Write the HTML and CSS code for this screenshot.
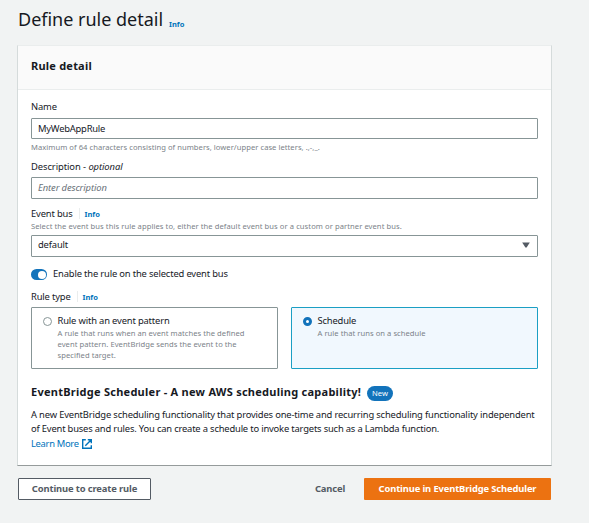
FILE: index.html
```html
<!DOCTYPE html>
<html lang="en">
<head>
<meta charset="utf-8">
<title>Define rule detail</title>
<link rel="stylesheet" href="styles.css">
</head>
<body>
<main class="page">
  <header class="page-head">
    <h1>Define rule detail</h1><a class="info">Info</a>
  </header>
  <section class="card">
    <div class="card-head"><h2>Rule detail</h2></div>
    <div class="card-body">
      <div class="label">Name</div>
      <div class="input input-name">MyWebAppRule</div>
      <div class="hint">Maximum of 64 characters consisting of numbers, lower/upper case letters, .,-,_.</div>

      <div class="label label-desc"><span>Description - <i>optional</i></span></div>
      <div class="input"><span class="placeholder">Enter description</span></div>

      <div class="label label-bus">Event bus<span class="rule"></span><a class="info">Info</a></div>
      <div class="hint hint-bus">Select the event bus this rule applies to, either the default event bus or a custom or partner event bus.</div>
      <div class="input select"><span>default</span>
        <svg class="caret" width="8" height="6" viewBox="0 0 8 6"><path d="M.2.5h7.6L4.6 5.6H3.4z" fill="#545b64"/></svg>
      </div>

      <div class="toggle-row"><span class="toggle"><span class="knob"></span></span>Enable the rule on the selected event bus</div>

      <div class="label label-type">Rule type<span class="rule"></span><a class="info">Info</a></div>
      <div class="tiles">
        <div class="tile">
          <span class="radio"></span>
          <div>
            <div class="tile-title">Rule with an event pattern</div>
            <div class="tile-desc">A rule that runs when an event matches the defined<br>event pattern. EventBridge sends the event to the<br>specified target.</div>
          </div>
        </div>
        <div class="tile selected">
          <span class="radio"></span>
          <div>
            <div class="tile-title">Schedule</div>
            <div class="tile-desc">A rule that runs on a schedule</div>
          </div>
        </div>
      </div>

      <div class="promo-head"><h3>EventBridge Scheduler - A new AWS scheduling capability!</h3><span class="badge">New</span></div>
      <p class="promo">A new EventBridge scheduling functionality that provides one-time and recurring scheduling functionality independent<br><span class="second-line">of Event buses and rules. You can create a schedule to invoke targets such as a Lambda function.</span></p>
      <a class="learn"><span>Learn More</span>
        <svg width="10" height="10" viewBox="0 0 10 10" fill="none" stroke="#0073bb" stroke-width="1.4"><path d="M3.8.7H.7v8.6h8.6V6.2M5.8.7h3.5v3.5M9 1 3.3 6.7"/></svg>
      </a>
    </div>
  </section>
  <footer class="actions">
    <button class="btn btn-create">Continue to create rule</button>
    <button class="btn btn-cancel">Cancel</button>
    <button class="btn btn-primary">Continue in EventBridge Scheduler</button>
  </footer>
</main>
</body>
</html>
```
FILE: styles.css
```css
* { box-sizing: border-box; }
body {
  margin: 0;
  background: #f1f3f3;
  color: #16191f;
  font: 9.4px/14px "Noto Sans", "Open Sans", sans-serif;
  letter-spacing: -0.16px;
  white-space: nowrap;
}
h1, h2, h3, p { margin: 0; }
.page { width: 535px; margin-left: 17px; }
.page-head { display: flex; height: 45px; padding: 7px 0 0 1px; }
h1 { width: 151px; font-size: 18px; line-height: 24px; font-weight: 400; letter-spacing: -0.01px; }
.info { color: #0073bb; font-size: 7.5px; font-weight: 700; letter-spacing: 0; }
.page-head .info { line-height: 34px; }

.card { height: 421px; background: #fff; border: 1px solid #d5dbdb; border-top-color: #eaeded; border-bottom-color: #959b9b; }
.card-head { height: 44px; padding: 12px 13px 0; background: #fafafa; border-bottom: 1px solid #eaeded; }
h2 { font-size: 11px; line-height: 15px; font-weight: 700; letter-spacing: 0.22px; }
.card-body { padding: 10px 13px 0; }
.label { display: flex; height: 18px; }
.input { display: flex; align-items: center; height: 22px; padding: 0 6px; border: 1px solid #879596; border-radius: 1px; }
.input-name { height: 21px; letter-spacing: -0.22px; }
.placeholder { color: #687078; font-style: italic; letter-spacing: -0.1px; }
.hint { height: 16px; line-height: 17px; font-size: 7.6px; color: #7b8289; letter-spacing: 0.045px; }
.label-desc { margin-top: 5px; height: 17px; letter-spacing: -0.07px; }
.label-bus { margin-top: 8px; height: 14px; }
.hint-bus { height: 14px; line-height: 11px; letter-spacing: 0.07px; }
.rule { width: 1px; height: 11px; margin: 1px 5px 0 6px; background: #eaeded; }
.select { justify-content: space-between; line-height: 18px; align-items: flex-start; }
.caret { margin: 6px 1px 0 0; }
.toggle-row { display: flex; align-items: center; height: 14px; margin-top: 10px; }
.toggle { display: flex; justify-content: flex-end; align-items: center; width: 16px; height: 11px; margin: 1px 6px 0 0; padding-right: 1px; border-radius: 6px; background: #1273bb; }
.knob { width: 8px; height: 8px; border-radius: 50%; background: #fff; }
.label-type { margin-top: 9px; height: 17px; }
.tiles { display: grid; grid-template-columns: 247px 247px; gap: 13px; }
.tile { display: flex; height: 62px; padding: 6px 11px; border: 1px solid #879596; border-radius: 1px; }
.selected { border-color: #1b9fc4; background: #f1f8fe; }
.radio { width: 9px; height: 9px; margin: 3px 5.5px 0 0; border: 1px solid #879596; border-radius: 50%; background: #fff; }
.selected .radio { border: 3px solid #1273bb; }
.tile-title { height: 14px; }
.tile-desc { font-size: 7.6px; line-height: 11px; color: #7b8289; letter-spacing: 0.045px; }
.promo-head { display: flex; height: 39px; padding-top: 15px; }
h3 { width: 336px; font-size: 11px; line-height: 15px; font-weight: 700; letter-spacing: 0.26px; }
.badge { width: 26px; height: 15px; margin-top: 2px; border-radius: 8px; background: #1273bb; color: #fff; font-size: 7.6px; line-height: 15px; letter-spacing: 0; text-align: center; }
.promo { height: 29px; }
.second-line { letter-spacing: -0.18px; }
.learn { display: flex; align-items: center; gap: 3px; color: #0073bb; letter-spacing: -0.3px; }
.actions { display: flex; padding: 12px 1px 0; }
.btn { height: 22px; padding: 0; border: 0; border-radius: 1px; background: none; color: #545b64; font: 700 9.4px/20px "Noto Sans", "Open Sans", sans-serif; letter-spacing: -0.13px; }
.btn-create { width: 133px; border: 1px solid #545b64; background: #fff; }
.btn-cancel { width: 32px; margin: 0 18px 0 auto; }
.btn-primary { width: 187px; background: #ec7211; color: #fff; }
```
